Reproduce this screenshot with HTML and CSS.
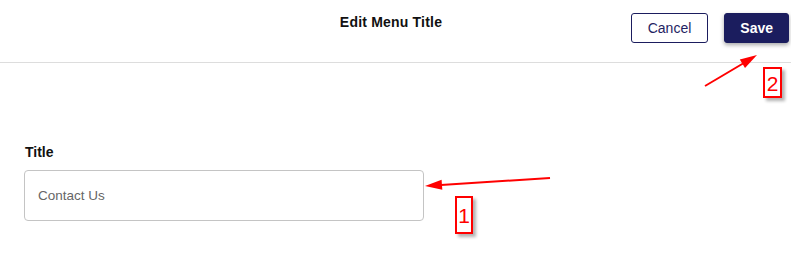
FILE: index.html
```html
<!DOCTYPE html>
<html lang="en">
<head>
    <meta charset="UTF-8">
    <title>Edit Menu Title</title>
    <link rel="stylesheet" href="styles.css">
</head>
<body>
    <div class="header">
        <div></div>
        <h1 class="header-title">Edit Menu Title</h1>
        <div class="header-actions">
            <button class="btn btn-outline">Cancel</button>
            <button class="btn btn-primary">Save</button>
        </div>
    </div>

    <div class="content">
        <label class="field-label" for="title">Title</label>
        <input class="field-input" id="title" type="text" value="Contact Us">
    </div>

    <!-- annotations -->
    <svg class="arrows" width="791" height="271" viewBox="0 0 791 271">
        <line x1="550" y1="178" x2="441" y2="185" stroke="#f00" stroke-width="2"/>
        <polygon points="425,186 442.3,189.8 441.6,179.8" fill="#f00"/>
        <line x1="705" y1="86" x2="743" y2="63.5" stroke="#f00" stroke-width="2"/>
        <polygon points="757,55 745,68 739.8,59.4" fill="#f00"/>
    </svg>
    <div class="callout callout-1">1</div>
    <div class="callout callout-2">2</div>
</body>
</html>
```

FILE: styles.css
```css
body {
    margin: 0;
    font-family: "Liberation Sans", Arial, sans-serif;
    background-color: #fff;
    color: #111;
}
.header {
    display: grid;
    grid-template-columns: 1fr auto 1fr;
    align-items: start;
    height: 63px;
    padding: 13px 2px 0 0;
    box-sizing: border-box;
    border-bottom: 1px solid #dddddd;
}
.header-title {
    margin: 1px 0 0 -7px;
    font-size: 14px;
    line-height: 16px;
    font-weight: bold;
    letter-spacing: 0.2px;
    color: #111;
}
.header-actions {
    display: flex;
    justify-content: flex-end;
    gap: 16px;
}
.btn {
    height: 30px;
    font-family: inherit;
    font-size: 14px;
    border-radius: 3px;
    border: 1px solid #1b1d5e;
    cursor: pointer;
}
.btn-outline {
    background-color: #fff;
    color: #1f2363;
    padding: 0 16px;
}
.btn-primary {
    background-color: #1b1d5e;
    color: #fff;
    font-weight: bold;
    padding: 0 15px;
    box-shadow: 0 2px 4px rgba(0, 0, 0, 0.35);
}
.content {
    padding: 81px 0 0 24px;
}
.field-label {
    display: block;
    font-size: 14px;
    line-height: 16px;
    font-weight: bold;
    margin: 0 0 10px 1px;
}
.field-input {
    display: block;
    width: 400px;
    height: 51px;
    box-sizing: border-box;
    border: 1px solid #c4c4c4;
    border-radius: 4px;
    padding: 0 13px;
    font-family: inherit;
    font-size: 13.5px;
    color: #666;
    outline: none;
}
.arrows {
    position: absolute;
    left: 0;
    top: 0;
    pointer-events: none;
}
.callout {
    position: absolute;
    box-sizing: border-box;
    border: 2px solid #f00;
    color: #f00;
    font-size: 21px;
    text-align: center;
    box-shadow: 3px 3px 3px rgba(0, 0, 0, 0.3);
}
.callout-1 {
    left: 455px;
    top: 196px;
    width: 18px;
    height: 38px;
    line-height: 36px;
}
.callout-2 {
    left: 763px;
    top: 67px;
    width: 19px;
    height: 31px;
    line-height: 29px;
}
```
